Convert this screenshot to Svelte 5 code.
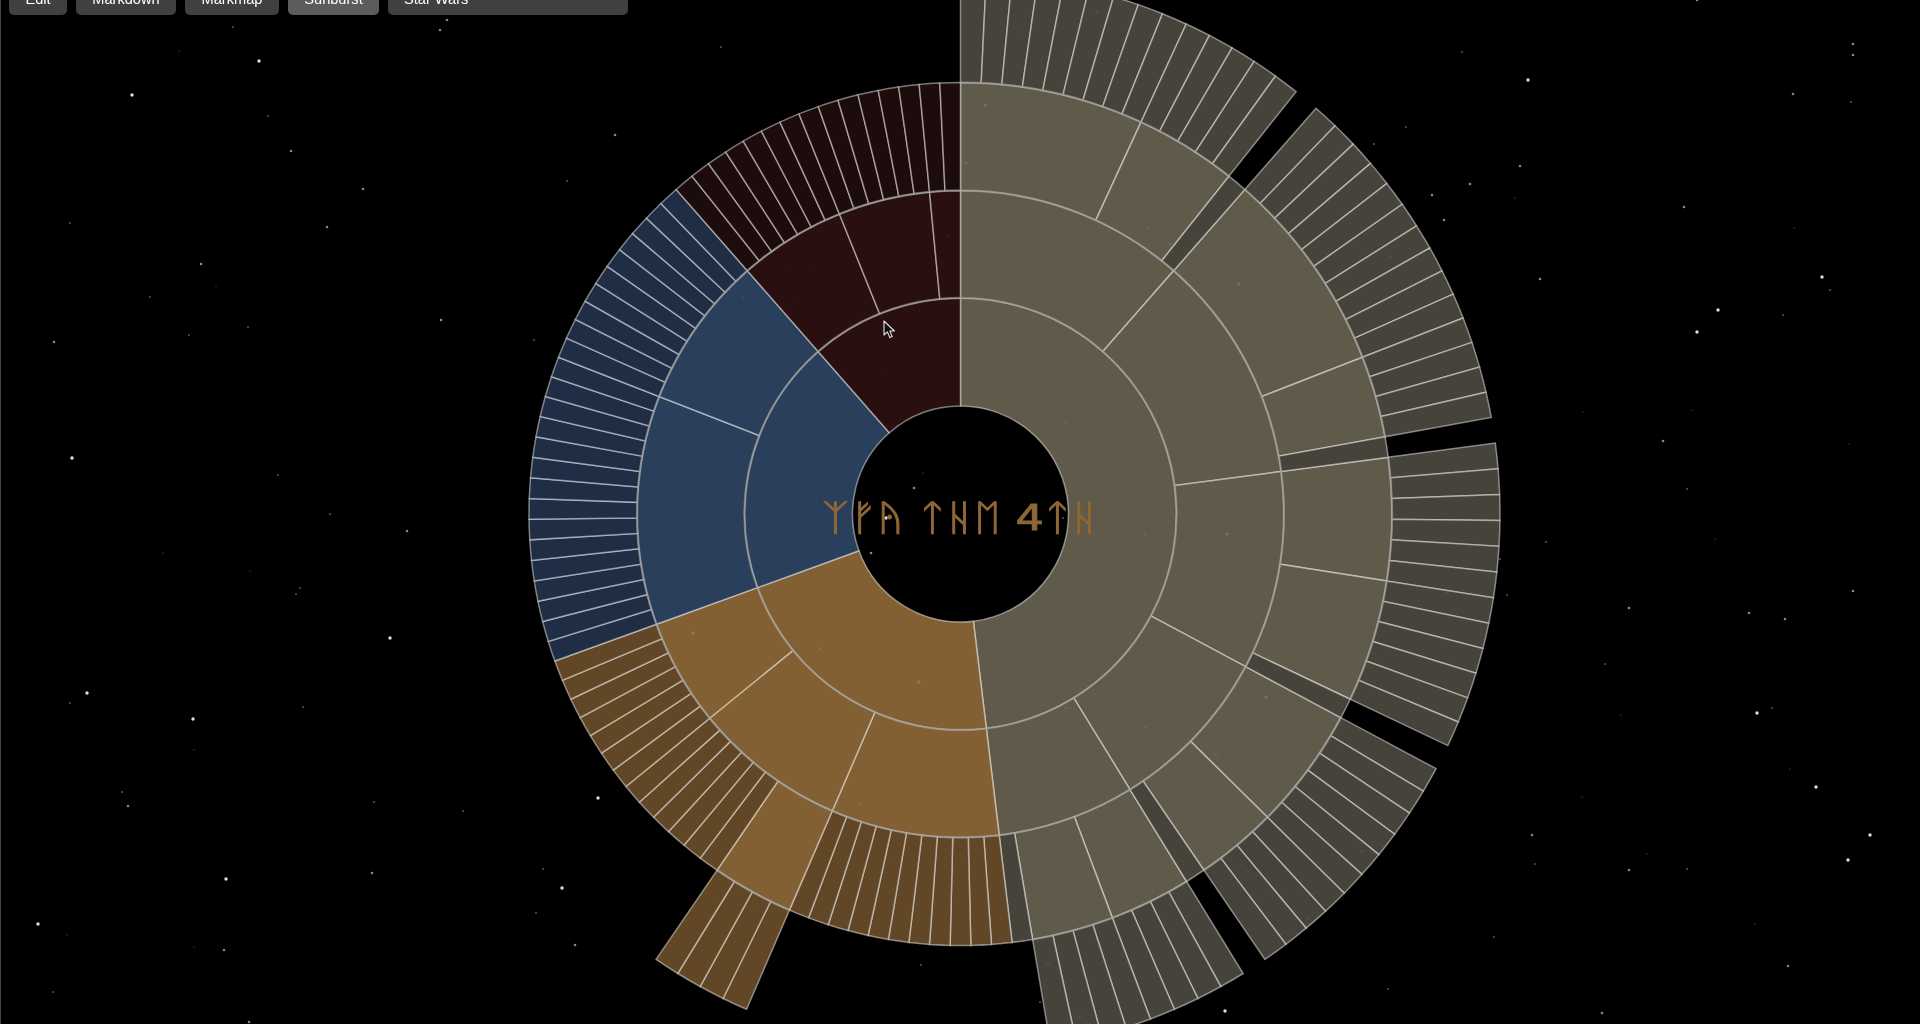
<script>
  const U = 360 / 131;
  const CX = 960.5;
  const CY = 514;
  const R = [108, 216, 323.5, 431.5, 539.5];

  const C = {
    sand: ['rgba(105,100,82,.9)', 'rgba(77,74,64,.9)'],
    orange: ['rgba(145,106,57,.9)', 'rgba(107,79,41,.9)'],
    blue: ['rgba(46,70,102,.9)', 'rgba(34,50,76,.9)'],
    red: ['rgba(46,17,17,.9)', 'rgba(32,13,13,.9)']
  };

  function pt(r, a) {
    const t = ((a * U) * Math.PI) / 180;
    return [(r * Math.sin(t)).toFixed(2), (-r * Math.cos(t)).toFixed(2)];
  }

  function arc(r0, r1, a0, a1) {
    const large = (a1 - a0) * U > 180 ? 1 : 0;
    const [x0, y0] = pt(r1, a0);
    const [x1, y1] = pt(r1, a1);
    const [x2, y2] = pt(r0, a1);
    const [x3, y3] = pt(r0, a0);
    return `M${x0} ${y0}A${r1} ${r1} 0 ${large} 1 ${x1} ${y1}L${x2} ${y2}A${r0} ${r0} 0 ${large} 0 ${x3} ${y3}Z`;
  }

  function ringArc(r, a0, a1) {
    const [x0, y0] = pt(r, a0);
    const [x1, y1] = pt(r, a1);
    return `M${x0} ${y0}A${r} ${r} 0 0 1 ${x1} ${y1}`;
  }

  const segs = [];
  const add = (ring, a0, a1, fill) =>
    segs.push({ d: arc(R[ring], R[ring + 1], a0, a1), fill });
  const strips = (ring, a0, a1, fill) => {
    for (let a = a0; a < a1; a++) add(ring, a, a + 1, fill);
  };

  // ring 1
  add(0, 0, 63, C.sand[0]);
  add(0, 63, 91, C.orange[0]);
  add(0, 91, 116, C.blue[0]);
  add(0, 116, 131, C.red[0]);

  // ring 2
  [[0, 15], [15, 30], [30, 43], [43, 54], [54, 63]].forEach(([a, b]) => add(1, a, b, C.sand[0]));
  [[63, 74], [74, 84], [84, 91]].forEach(([a, b]) => add(1, a, b, C.orange[0]));
  [[91, 106], [106, 116]].forEach(([a, b]) => add(1, a, b, C.blue[0]));
  [[116, 123], [123, 129], [129, 131]].forEach(([a, b]) => add(1, a, b, C.red[0]));

  // ring 3 and 4, sand
  [[0, 9], [9, 14], [15, 25], [25, 29], [30, 36], [36, 42], [43, 49], [49, 53], [54, 58], [58, 62]].forEach(([a, b]) => {
    add(2, a, b, C.sand[0]);
    strips(3, a, b, C.sand[1]);
  });
  [14, 29, 42, 53, 62].forEach((a) => add(2, a, a + 1, C.sand[1]));

  // ring 3 and 4, others
  strips(2, 63, 74, C.orange[1]);
  add(2, 74, 78, C.orange[0]);
  strips(3, 74, 78, C.orange[1]);
  strips(2, 78, 91, C.orange[1]);
  strips(2, 91, 116, C.blue[1]);
  strips(2, 116, 131, C.red[1]);

  // heavier seams where one ring meets the next
  const seams = [
    ringArc(R[1], 0, 65.5),
    ringArc(R[1], 65.5, 131),
    ringArc(R[2], 0, 65.5),
    ringArc(R[2], 65.5, 131),
    ...[[0, 14], [15, 29], [30, 42], [43, 53], [54, 62], [74, 78]].map(([a, b]) => ringArc(R[3], a, b))
  ];

  const B = [1.7, 0.88]; // bright
  const M = [1.3, 0.52]; // mid
  const D = [0.95, 0.36]; // dim
  const V = [0.85, 0.18]; // very dim

  const stars = [
    [233,27,D],[179,51,V],[259,61,B],[132,95,B],[268,116,D],[291,151,M],[363,189,M],[70,223,D],[327,227,M],[201,264,M],[216,286,V],[150,297,D],[248,327,D],[189,335,D],[54,342,M],[441,320,M],[72,458,B],[278,475,D],[330,514,D],[440,30,M],[447,20,M],
    [407,531,M],[163,553,V],[250,571,V],[300,588,D],[296,594,D],[390,638,B],[87,693,B],[70,703,D],[193,719,B],[303,707,D],[194,750,V],[122,792,D],[128,806,M],[374,802,D],[463,811,D],[226,879,B],[372,873,M],[38,924,B],[67,935,V],[194,947,V],[224,950,M],[53,992,D],[249,1022,M],
    [598,798,B],[543,869,D],[562,888,B],[536,913,D],[575,945,M],[921,965,D],[615,135,M],[567,181,D],[534,340,D],[721,47,D],[914,488,M],[886,518,B],[871,553,M],[923,473,V],[1063,518,D],
    [1462,52,D],[1406,127,D],[1374,144,D],[1432,195,M],[1470,184,M],[1444,220,M],[1528,80,B],[1520,166,M],[1515,198,V],[1540,279,M],[1684,207,M],[1853,44,M],[1853,55,M],[1793,94,M],[1851,102,D],[1794,228,V],[1822,277,B],[1830,290,D],[1718,310,B],[1697,332,B],[1783,315,D],[1583,412,V],[1692,410,V],[1663,441,M],[1849,444,V],[1687,489,D],[1697,0,M],
    [1546,542,D],[1715,539,V],[1500,559,D],[1507,595,D],[1629,608,M],[1749,613,M],[1785,619,M],[1853,591,M],[1605,664,D],[1621,715,V],[1757,713,B],[1772,708,D],[1790,769,V],[1816,787,B],[1582,797,V],[1532,835,M],[1535,864,D],[1647,854,V],[1629,870,M],[1687,869,D],[1870,835,B],[1848,860,B],[1755,924,V],[1788,966,M],[1494,937,D],[1602,1013,M],[1388,989,D],[1225,1011,B],[1040,1002,D],
    [985,105,B],[965,163,M],[1097,12,M],[1018,32,M],[1149,228,M],[1170,244,M],[1030,260,D],[1239,284,B],[1293,218,D],[1396,245,D],[1390,257,M],[1272,253,D],[1066,422,M],[1339,462,D],
    [1227,534,B],[1145,534,M],[1215,511,D],[1178,575,D],[1080,631,D],[1376,599,D],[1446,593,M],[1266,697,B],[1146,727,M],[1066,708,M],[1216,755,M],[1362,851,M],[1248,871,M],[1309,919,M],[1048,964,M],[1080,1017,M],
    [693,633,B],[820,649,M],[919,682,B],[592,668,D],[658,699,D],[853,780,D],[860,804,M],[895,862,D],[757,904,D],[617,537,D],[743,298,M],[675,318,M],[949,236,M],[788,266,D],[813,269,D],[797,298,D],[882,370,D],[966,163,M]
  ];

  const buttons = [
    { label: 'Edit', cls: 'b-edit' },
    { label: 'Markdown', cls: 'b-md' },
    { label: 'Markmap', cls: 'b-mm' },
    { label: 'Sunburst', cls: 'b-sb active' },
    { label: 'Star Wars', cls: 'b-sw' }
  ];
</script>

<div class="stage">
  <svg class="canvas" viewBox="0 0 1920 1024" aria-hidden="true">
    {#each stars as [x, y, s]}
      <circle cx={x} cy={y} r={s[0]} fill="#fff" opacity={s[1]} />
    {/each}
  </svg>

  <svg class="canvas" viewBox="0 0 1920 1024" role="img" aria-label="Sunburst chart">
    <g transform="translate({CX} {CY})">
      {#each segs as s}
        <path d={s.d} fill={s.fill} class="seg" />
      {/each}
      {#each seams as d}
        <path {d} class="seam" />
      {/each}
      <text class="runes" x="0" y="16" text-anchor="middle" transform="scale(1.24 1)">ᛉᚠᚤ ᛏᚺᛖ 4ᛏᚺ</text>
    </g>
  </svg>

  <nav class="toolbar">
    {#each buttons as b}
      <button class={b.cls}>{b.label}</button>
    {/each}
  </nav>

  <svg class="cursor" viewBox="0 0 14 20" width="14" height="20" aria-hidden="true">
    <path d="M1 1V15L4.4 11.9L6.8 17.6L9.2 16.6L6.8 11H11.4Z" fill="#111" stroke="#e4e4e4" stroke-width="1.1" stroke-linejoin="round" />
  </svg>
</div>

<style>
  :global(body) {
    margin: 0;
    background: #000;
  }
  .stage {
    position: relative;
    display: grid;
    width: 1920px;
    height: 1024px;
    overflow: hidden;
    background: #000;
    box-shadow: inset 1px 0 0 #444;
    filter: blur(0.45px);
  }
  .canvas {
    grid-area: 1 / 1;
    display: block;
    width: 1920px;
    height: 1024px;
  }
  .seg {
    stroke: rgba(255, 255, 255, 0.46);
    stroke-width: 1.5;
  }
  .seam {
    fill: none;
    stroke: rgba(140, 140, 135, 0.55);
    stroke-width: 2.4;
  }
  .runes {
    font-family: "DejaVu Sans", "Noto Sans", sans-serif;
    font-size: 36px;
    fill: #8f6735;
    stroke: #8f6735;
    stroke-width: 0.9;
  }
  .toolbar {
    grid-area: 1 / 1;
    align-self: start;
    display: flex;
    gap: 9px;
    margin: -17px 0 0 9px;
  }
  button {
    height: 32px;
    padding: 0;
    border: 0;
    border-radius: 5px;
    background: #404040;
    color: #fff;
    font: 14.6px "Liberation Sans", Arial, sans-serif;
  }
  .b-edit { width: 58px; }
  .b-md { width: 100px; }
  .b-mm { width: 94px; }
  .b-sb { width: 91px; }
  .b-sw {
    width: 240px;
    text-align: left;
    padding-left: 16px;
  }
  .active { background: #5c5c5c; }
  .cursor {
    position: absolute;
    left: 883px;
    top: 320px;
  }
</style>
